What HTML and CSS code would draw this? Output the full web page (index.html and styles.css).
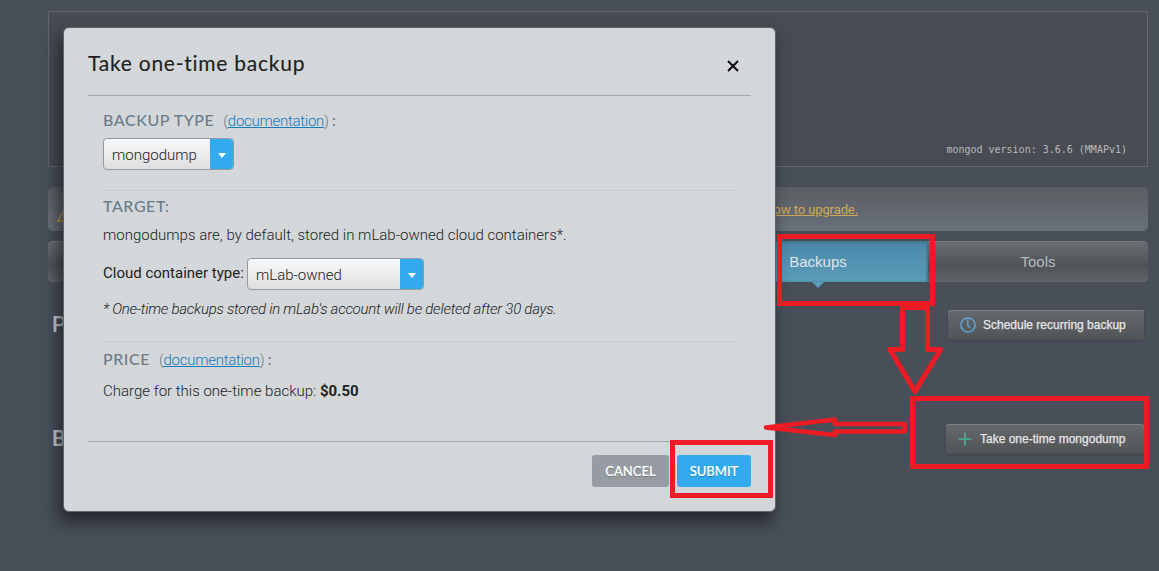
FILE: index.html
```
<!DOCTYPE html>
<html lang="en">
<head>
<meta charset="utf-8">
<title>Take one-time backup</title>
<link rel="stylesheet" href="styles.css">
</head>
<body>
<main class="page">
  <section class="info"><span class="version">mongod version: 3.6.6 (MMAPv1)</span></section>
  <section class="banner">
    <svg class="warn" width="14" height="13" viewBox="0 0 14 13"><path d="M7 1.2 13 12H1Z" fill="none" stroke="#c9a23c" stroke-width="1.5"/></svg>
    <a class="upgrade">how to upgrade.</a>
  </section>
  <nav class="tabs">
    <div class="tab"></div><div class="tab"></div><div class="tab"></div>
    <div class="tab active">Backups</div>
    <div class="tab">Tools</div>
  </nav>
  <div class="row">
    <h2>P</h2>
    <button class="dark"><svg width="16" height="16" viewBox="0 0 16 16" fill="none" stroke="#5aa5d2" stroke-width="1.5"><circle cx="8" cy="8" r="7.1"/><path d="M7.7 2.5V8.1L10.2 10.6"/></svg><span>Schedule recurring backup</span></button>
  </div>
  <div class="row second">
    <h2>B</h2>
    <button class="dark wide"><svg width="14" height="14" viewBox="0 0 14 14" fill="none" stroke="#4bb08f" stroke-width="1.7"><path d="M7 .5V13.5M.5 7H13.5"/></svg><span>Take one-time mongodump</span></button>
  </div>
</main>

<div class="modal" role="dialog">
  <header class="head">
    <h1>Take one-time backup</h1>
    <svg class="close" width="12" height="12" viewBox="0 0 12 12"><path d="M1 1 11 11M11 1 1 11" stroke="#0b0b0d" stroke-width="2"/></svg>
  </header>
  <div class="body">
    <section class="block type">
      <h3><span>BACKUP TYPE</span><span class="doc">(<a>documentation</a>) <b>:</b></span></h3>
      <div class="select s1"><span>mongodump</span><i><svg width="8" height="5" viewBox="0 0 8 5"><path d="M0 0H8L4 5Z" fill="#fff"/></svg></i></div>
    </section>
    <section class="block target">
      <h3><span>TARGET:</span></h3>
      <p class="stored">mongodumps are, by default, stored in mLab-owned cloud containers*.</p>
      <div class="field"><label>Cloud container type:</label><div class="select s2"><span>mLab-owned</span><i><svg width="8" height="5" viewBox="0 0 8 5"><path d="M0 0H8L4 5Z" fill="#fff"/></svg></i></div></div>
      <p class="note">* One-time backups stored in mLab's account will be deleted after 30 days.</p>
    </section>
    <section class="block price">
      <h3><span>PRICE</span><span class="doc">(<a>documentation</a>) <b>:</b></span></h3>
      <p class="charge">Charge for this one-time backup: <b>$0.50</b></p>
    </section>
  </div>
  <footer class="foot"><button class="btn cancel"><span>CANCEL</span></button><button class="btn submit"><span>SUBMIT</span></button></footer>
</div>

<svg class="marks" width="1159" height="571" viewBox="0 0 1159 571" fill="none" stroke="#ed1c24" stroke-width="5">
  <rect x="779.5" y="236.5" width="153" height="67"/>
  <rect x="912.5" y="398.5" width="234" height="68"/>
  <rect x="672.5" y="442.5" width="98" height="53"/>
  <path d="M902.5 307.5H927.5V349.5H940.5L915 391.5L890 349.5H902.5Z" stroke-linejoin="round"/>
  <path d="M904.5 424H835V419.5L766 427.5L835 435V431.5H904.5Z" stroke-width="4.6" stroke-linejoin="round"/>
</svg>
</body>
</html>
```
FILE: styles.css
```
* { box-sizing: border-box; }
body { margin: 0; width: 1159px; height: 571px; overflow: hidden; position: relative; background: #484f59; font-family: Roboto, "Liberation Sans", sans-serif; }
h1, h2, h3, p { margin: 0; font-weight: 400; white-space: nowrap; }
button { border: 0; padding: 0; margin: 0; }
svg { display: block; flex: none; }

.page { width: 1100px; margin-left: 48px; padding-top: 11px; display: flex; flex-direction: column; }
.info { height: 156px; border: 1px solid #63676c; background: #484b52; display: flex; justify-content: flex-end; align-items: flex-end; padding: 0 20px 9px 0; }
.version { font: 10px/14px "DejaVu Sans Mono", monospace; color: #b9babb; }
.banner { height: 44px; margin-top: 20px; border-radius: 5px; background: linear-gradient(#5b5e63, #697078); display: flex; align-items: center; padding-left: 9px; }
.warn { margin-top: 12px; }
.upgrade { width: 787px; margin-top: 2px; text-align: right; font: 13px/16px Roboto, sans-serif; letter-spacing: -.1px; color: #cfa952; text-decoration: underline; }
.tabs { display: grid; grid-template-columns: repeat(5, 220px); grid-template-rows: 41px; height: 41px; margin-top: 10px; }
.tab { height: 41px; background: linear-gradient(#6a6d71, #505356 60%, #5f6367); color: #b8babb; font: 15px/42px "Liberation Sans", sans-serif; text-align: center; box-shadow: inset 0 1px #777a7d, inset 0 -1px #686b6e; }
.tab:first-child { border-radius: 5px 0 0 5px; }
.tab:last-child { border-radius: 0 5px 5px 0; }
.tab.active { position: relative; background: linear-gradient(#4b88a9, #5b9cba); color: #dfe6ea; box-shadow: inset 0 2px 3px #3d7391, inset -1px 0 2px #3d7391; }
.tab.active::after { content: ""; position: absolute; left: 104px; top: 41px; border: 6px solid transparent; border-top-color: #5b9cba; border-bottom: 0; }
.row { display: flex; justify-content: space-between; align-items: center; height: 30px; margin-top: 28px; padding: 0 4px; }
.row.second { margin-top: 84px; }
.row h2 { font-size: 22px; line-height: 30px; font-weight: 500; color: #d0d3d6; }
.dark { width: 196px; height: 30px; border-radius: 3px; background: linear-gradient(#66696c, #515457); box-shadow: inset 0 1px #7d8083, 0 1px 2px #3d434b; display: flex; align-items: center; padding-left: 12px; color: #e6e7e8; font: 12px "Liberation Sans", sans-serif; -webkit-text-stroke: .25px #e6e7e8; white-space: nowrap; }
.dark span { margin-left: 7px; }
.dark.wide { width: 198px; }
.dark.wide span { margin-left: 8px; }

.modal { position: absolute; left: 63px; top: 27px; width: 713px; height: 485px; padding: 0 24px; background: #d3d7da; border: 1px solid #606468; border-radius: 6px; box-shadow: -4px 10px 16px rgba(20,22,26,.7); color: #222; }
.head { height: 68px; border-bottom: 1px solid #a4a8ab; display: flex; justify-content: space-between; padding: 21px 12px 0 0; }
.head h1 { font: 21px/28px Lato, sans-serif; letter-spacing: .75px; color: #1d1f20; -webkit-text-stroke: .15px #1d1f20; }
.close { margin-top: 11px; }
.body { height: 346px; border-bottom: 1px solid #a4a8ab; padding: 0 15px; }
.block h3 { font: 500 16px/20px Lato, sans-serif; color: #6c7c88; display: flex; align-items: center; height: 20px; letter-spacing: .55px; }
.type { height: 95px; padding-top: 14px; border-bottom: 1px solid #c5c9cc; }
.target { height: 151px; padding-top: 5px; border-bottom: 1px solid #c5c9cc; }
.price { padding-top: 7px; }
.doc { margin-left: 9px; font: 300 15px/20px Roboto, sans-serif; letter-spacing: -.27px; padding-top: 2px; }
.doc b { font-weight: 500; }
.doc a { color: #147bbd; text-decoration: underline; }
.select { height: 32px; border: 1px solid #959a9e; border-radius: 4px; background: linear-gradient(#f8f9fa, #dcdedf); display: flex; justify-content: space-between; overflow: hidden; font: 300 15px/32px Roboto, sans-serif; padding-left: 8px; }
.select i { width: 23px; background: #32aaee; display: flex; align-items: center; justify-content: center; padding-top: 2px; }
.s1 { width: 131px; margin-top: 8px; }
.s2 { width: 177px; }
p { font-size: 15px; line-height: 20px; font-weight: 300; }
.stored { margin-top: 9px; }
.field { display: flex; gap: 4px; margin-top: 13px; }
.field label { font-size: 15px; line-height: 30px; width: 140px; white-space: nowrap; }
.note { margin-top: 9px; font-style: italic; letter-spacing: -.26px; }
.charge { margin-top: 12px; }
.charge b { font-weight: 700; }
.foot { display: flex; justify-content: flex-end; gap: 8px; padding-top: 13px; }
.btn { height: 32px; border-radius: 3px; font: 13px Lato, sans-serif; font-weight: 500; color: #fff; -webkit-text-stroke: .2px #fff; text-shadow: 0 1px 1px rgba(0,0,0,.25); }
.cancel { width: 77px; background: #969ca1; }
.submit { width: 74px; background: #32aaee; }
.marks { position: absolute; left: 0; top: 0; }
```
